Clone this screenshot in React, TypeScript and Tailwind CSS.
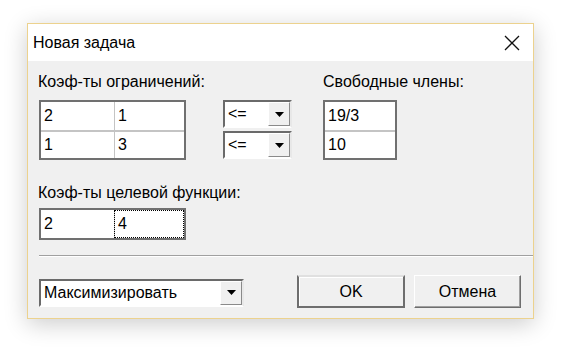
import React from 'react';

const font = { fontFamily: '"Liberation Sans", Arial, sans-serif' };

function Arrow() {
  return (
    <svg width="9" height="5" viewBox="0 0 9 5">
      <path d="M0 0h9L4.5 5z" fill="#000" />
    </svg>
  );
}

function Combo({ value, width }: { value: string; width: string }) {
  return (
    <div className={`flex ${width} h-[28px] border-2 border-t-[#6a6a6a] border-l-[#6a6a6a] border-r-[#e8e8e8] border-b-[#ffffff] bg-white`}>
      <div className="flex-1 flex items-center pl-[3px] text-[16px] text-black">{value}</div>
      <div className="w-[22px] flex items-center justify-center bg-[#f0f0f0] border border-t-white border-l-white border-r-[#8a8a8a] border-b-[#8a8a8a]">
        <Arrow />
      </div>
    </div>
  );
}

function Grid({ rows, cols, focus }: { rows: string[][]; cols: string[]; focus?: [number, number] }) {
  return (
    <div className="border-2 border-[#707070] bg-white">
      {rows.map((r, i) => (
        <div key={i} className={`flex h-[28px] ${i > 0 ? 'border-t-2 border-[#c4c4c4]' : ''}`}>
          {r.map((c, j) => {
            const isFocus = focus && focus[0] === i && focus[1] === j;
            return (
              <div
                key={j}
                className={`${cols[j]} flex items-center pl-[3px] text-[16px] text-black ${j > 0 ? 'border-l border-[#c4c4c4]' : ''} ${isFocus ? 'outline outline-1 outline-dotted outline-black -outline-offset-1' : ''}`}
              >
                {c}
              </div>
            );
          })}
        </div>
      ))}
    </div>
  );
}

export default function App() {
  return (
    <div className="w-[576px] h-[360px] bg-white pt-[23px] pl-[27px]" style={font}>
      <div className="w-[507px] h-[296px] flex flex-col border border-[#ecd28e] shadow-[0_5px_22px_rgba(0,0,0,0.2)]">
        <div className="h-[37px] bg-white flex items-center justify-between pl-[5px] pr-[13px]">
          <span className="text-[16px] text-black">Новая задача</span>
          <svg width="16" height="16" viewBox="0 0 16 16">
            <path d="M1 1L15 15M15 1L1 15" stroke="#111" strokeWidth="1.3" />
          </svg>
        </div>
        <div className="flex-1 bg-[#f0f0f0] flex flex-col pt-[13px]">
          <div className="flex items-start px-[11px]">
            <div className="w-[147px] flex flex-col gap-[10px]">
              <span className="text-[16px] leading-4 whitespace-nowrap -ml-px text-black">Коэф-ты ограничений:</span>
              <Grid rows={[['2', '1'], ['1', '3']]} cols={['w-[73px]', 'flex-1']} />
            </div>
            <div className="ml-[37px] mt-[26px] flex flex-col gap-[3px]">
              <Combo value="<=" width="w-[69px]" />
              <Combo value="<=" width="w-[69px]" />
            </div>
            <div className="ml-[31px] flex flex-col gap-[10px]">
              <span className="text-[16px] leading-4 whitespace-nowrap text-black">Свободные члены:</span>
              <div className="w-[74px]">
                <Grid rows={[['19/3'], ['10']]} cols={['flex-1']} />
              </div>
            </div>
          </div>
          <div className="mt-[25px] px-[11px] flex flex-col gap-[7px]">
            <span className="text-[16px] leading-4 whitespace-nowrap -ml-px text-black">Коэф-ты целевой функции:</span>
            <div className="w-[147px]">
              <Grid rows={[['2', '4']]} cols={['w-[73px]', 'flex-1']} focus={[0, 1]} />
            </div>
          </div>
          <div className="mt-[15px] ml-[11px] border-t border-b border-t-[#a0a0a0] border-b-white" />
          <div className="mt-[18px] px-[11px] flex items-center">
            <div className="mt-[2px]">
              <Combo value="Максимизировать" width="w-[205px]" />
            </div>
            <button className="ml-[53px] w-[108px] h-[33px] text-[16px] text-black bg-[#f0f0f0] border-2 border-[#6e6e6e] border-t-[#e0e0e0] shadow-[inset_1px_1px_0_#fff]">
              OK
            </button>
            <button className="ml-[9px] w-[107px] h-[33px] text-[16px] text-black bg-[#f0f0f0] border border-t-white border-l-white border-r-[#6e6e6e] border-b-[#6e6e6e] shadow-[inset_-1px_-1px_0_#a0a0a0]">
              Отмена
            </button>
          </div>
        </div>
      </div>
    </div>
  );
}
